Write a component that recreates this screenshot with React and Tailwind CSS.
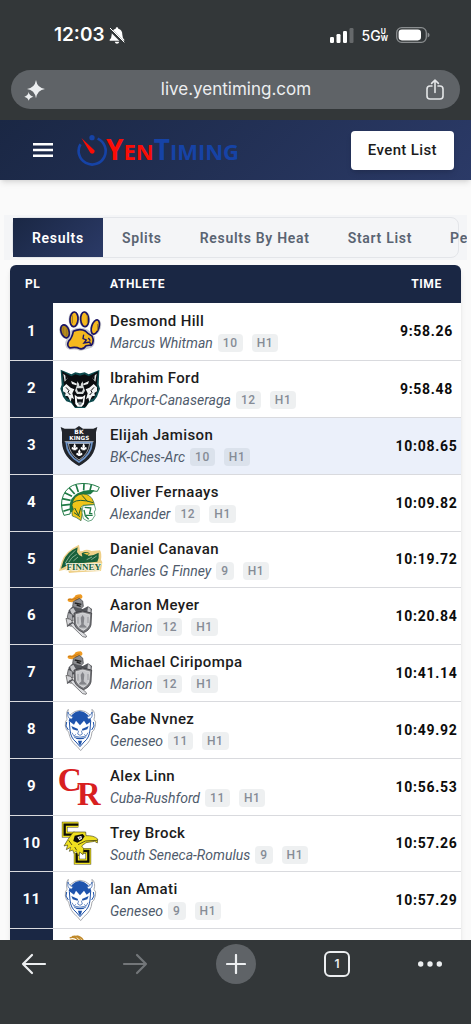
import React, { useState } from 'react';

const TABS = ['Results', 'Splits', 'Results By Heat', 'Start List', 'Performance List'];

const RESULTS = [
  { place: 1, name: 'Desmond Hill', school: 'Marcus Whitman', grade: 10, heat: 'H1', time: '9:58.26', logo: 'paw' },
  { place: 2, name: 'Ibrahim Ford', school: 'Arkport-Canaseraga', grade: 12, heat: 'H1', time: '9:58.48', logo: 'wolf' },
  { place: 3, name: 'Elijah Jamison', school: 'BK-Ches-Arc', grade: 10, heat: 'H1', time: '10:08.65', logo: 'kings', highlight: true },
  { place: 4, name: 'Oliver Fernaays', school: 'Alexander', grade: 12, heat: 'H1', time: '10:09.82', logo: 'trojan' },
  { place: 5, name: 'Daniel Canavan', school: 'Charles G Finney', grade: 9, heat: 'H1', time: '10:19.72', logo: 'finney' },
  { place: 6, name: 'Aaron Meyer', school: 'Marion', grade: 12, heat: 'H1', time: '10:20.84', logo: 'knight' },
  { place: 7, name: 'Michael Ciripompa', school: 'Marion', grade: 12, heat: 'H1', time: '10:41.14', logo: 'knight' },
  { place: 8, name: 'Gabe Nvnez', school: 'Geneseo', grade: 11, heat: 'H1', time: '10:49.92', logo: 'devil' },
  { place: 9, name: 'Alex Linn', school: 'Cuba-Rushford', grade: 11, heat: 'H1', time: '10:56.53', logo: 'cr' },
  { place: 10, name: 'Trey Brock', school: 'South Seneca-Romulus', grade: 9, heat: 'H1', time: '10:57.26', logo: 'falcon' },
  { place: 11, name: 'Ian Amati', school: 'Geneseo', grade: 9, heat: 'H1', time: '10:57.29', logo: 'devil' },
  { place: 12, name: 'Jordan Samuel', school: 'Avon', grade: 11, heat: 'H1', time: '10:58.04', logo: 'brave' },
];

const PawLogo = () => (
  <svg viewBox="172 31 132 132" className="size-11">
    <g fill="#c9cacf" stroke="#c9cacf" strokeWidth="13" strokeLinejoin="round">
      <ellipse cx="193" cy="98" rx="10" ry="16" transform="rotate(-18 193 98)" />
      <ellipse cx="220" cy="62" rx="10" ry="18" />
      <ellipse cx="252" cy="62" rx="10" ry="18" />
      <ellipse cx="285" cy="85" rx="9" ry="18" transform="rotate(18 285 85)" />
      <path d="M216 100Q238 88 260 100L276 116Q278 136 270 141L240 150Q226 144 208 147Q194 140 204 124Z" />
    </g>
    <g fill="#f5b81e" stroke="#1b1464" strokeWidth="5" strokeLinejoin="round">
      <ellipse cx="193" cy="98" rx="12" ry="20" transform="rotate(-18 193 98)" fill="#b58a1c" />
      <ellipse cx="220" cy="62" rx="12" ry="22" transform="rotate(4 220 62)" />
      <ellipse cx="252" cy="62" rx="12" ry="22" transform="rotate(-4 252 62)" />
      <ellipse cx="284" cy="85" rx="11" ry="22" transform="rotate(18 284 85)" />
      <path d="M218 98Q238 88 254 97Q262 106 274 112Q282 128 272 140Q262 139 256 141Q248 153 238 150Q224 143 208 148Q196 141 205 126Q214 118 218 98Z" />
    </g>
    <path d="M188 86v22M198 90v22M215 50v24M260 50v24M291 76v20" stroke="#9a7820" strokeWidth="3" fill="none" />
    <path d="M249 108l-2 12 10 4-7 9 17-3 3 8M263 118l6 8" stroke="#1b1464" strokeWidth="4" fill="none" />
  </svg>
);

const WolfLogo = () => (
  <svg viewBox="172 201 132 132" className="size-11">
    <path d="M180 209l32 14 12-6 14 3 14-3 12 6 32-13-2 44 4 12-9 24-10 14-14 4-12 16h-30l-12-16-14-4-10-14-8-24 4-12z" fill="#0d4a4d" />
    <path d="M184 214l28 15 12-6 14 4 14-4 12 6 28-15-4 40 4 14-12 26-13 6-11 20h-35l-11-20-12-6-12-26 4-14z" fill="#0b0d10" />
    <path d="M188 221l14 12-10 12zM288 221l-14 12 10 12z" fill="#dfe3e4" />
    <path d="M194 225l9 8-8 7zM282 225l-9 8 8 7z" fill="#0b0d10" />
    <path d="M187 262l10-10 13 11 11 5-6 12 5 18-7-5-3 12-8-16-9-2 2-8-8-5zM289 262l-10-10-13 11-11 5 6 12-5 18 7-5 3 12 8-16 9-2-2-8 8-5z" fill="#f2f4f4" />
    <path d="M196 262l9 10-3 5 7 8M280 262l-9 10 3 5-7 8" fill="none" stroke="#0b0d10" strokeWidth="3" />
    <path d="M211 243l18 8-2 5-13-4zM265 243l-18 8 2 5 13-4z" fill="#eef0f0" />
    <path d="M230 244l8 12 8-12 2 14 5 14-6 10h-18l-6-10 5-14z" fill="#d6dada" />
    <path d="M238 232v26" stroke="#0b0d10" strokeWidth="4" />
    <path d="M228 265h20l-4 10h-12z" fill="#0b0d10" />
    <path d="M222 284l8 6h16l8-6-4 28-7 8h-12l-7-8z" fill="#fff" />
    <path d="M228 292l3 6h14l3-6-2 16h-16z" fill="#0b0d10" />
    <path d="M232 312l2-7h8l2 7-6 5z" fill="#8b9599" />
  </svg>
);

const KingsLogo = () => (
  <svg viewBox="172 26 132 132" className="size-11 overflow-visible">
    <path d="M180 35l12 5h31l12-8 12 8h31l12-5-4 16v30q-2 46-51 71q-49-25-51-71V51z" fill="#22252b" />
    <path d="M197 82h77q-2 36-39 58q-37-22-38-58z" fill="#16181c" stroke="#6d94c9" strokeWidth="5" />
    <path d="M192 79h87M203 84h64q-3 32-32 50q-29-18-32-50z" fill="none" stroke="#e6eaee" strokeWidth="2" />
    <text x="235" y="57" textAnchor="middle" fontSize="18" fontWeight="700" fill="#fff" className="font-['DejaVu_Sans',sans-serif]">BK</text>
    <text x="236" y="74" textAnchor="middle" fontSize="17" fontWeight="700" fill="#fff" className="font-['DejaVu_Sans',sans-serif]">KINGS</text>
    <g fill="#fff">
      <path d="M222 84l4 8-2 6q6-6 7 0t-6 4l2 3h-10l2-3q-7 2-6-4t7 0l-2-6z" />
      <path d="M249 84l4 8-2 6q6-6 7 0t-6 4l2 3h-10l2-3q-7 2-6-4t7 0l-2-6z" />
      <path d="M236 101l4 8-2 6q6-6 7 0t-6 4l2 3h-10l2-3q-7 2-6-4t7 0l-2-6z" />
    </g>
  </svg>
);

const TrojanLogo = () => (
  <svg viewBox="172 197 132 132" className="size-11">
    <path d="M190 300q-14-32-2-60q12-28 42-34q34-6 66 10l-6 12q-30-4-52 6q-24 12-26 40l-4 22z" fill="#fff" stroke="#1f7a45" strokeWidth="3" />
    <path d="M208 288q-6-40 24-55q22-11 50-8l-12 12q-36 0-42 22l-6 36z" fill="#1f7a45" />
    <path d="M188 288l24-8M182 270l28-3M184 250l26 5M192 232l22 11M206 218l16 18M226 208l7 22M250 206l-1 19M272 209l-4 16" stroke="#1f7a45" strokeWidth="5" />
    <path d="M214 270q4-34 34-34q22 0 31 24l2 8-34 2-6 6 4 16-4 24q-16-12-26-14q-4-14 3-20z" fill="#f0c419" stroke="#1f5c33" strokeWidth="2" />
    <path d="M216 262q18-14 62 0M244 240l16 18M222 278l12 22 6-22M220 292l18 12" stroke="#1f5c33" strokeWidth="3" fill="none" />
    <path d="M247 271l34-3 4 14-4 8 2 10-9 14-12 4-14-8-4-18z" fill="#fff" stroke="#1f7a45" strokeWidth="2" />
    <path d="M252 276l20 2M270 280l-3 14 8 1M256 300l20 0M250 284l4 18 10 10" stroke="#1f7a45" strokeWidth="4" fill="none" />
  </svg>
);

const FinneyLogo = () => (
  <svg viewBox="172 22 132 132" className="size-11 overflow-visible">
    <path d="M175 124l8-28q10-32 52-51l3 20 8-1q12-8 26 0l26-2q6 10 3 28l4 8-4 26-40 2-30 2-26 2-4-12z" fill="#efd089" />
    <path d="M181 117l7-22q10-28 43-42l-2 14q4 10 16 14l-2-10q12-8 24 0l-6 8q20-2 33-10q2 16-4 27l-84 8z" fill="#19603a" />
    <path d="M194 100q12-24 30-38M204 98q8-16 24-24M218 94l14-12M258 90l16-8M272 90l16-11" stroke="#b9d3bd" strokeWidth="2" fill="none" />
    <path d="M248 70l12-1 8 5-10 1z" fill="#f3c846" />
    <text x="249" y="121" textAnchor="middle" fontSize="27" fontWeight="700" fill="#19603a" stroke="#f7f1dc" strokeWidth="5" paintOrder="stroke" className="font-['Liberation_Serif',serif]">FINNEY</text>
  </svg>
);

const KnightLogo = () => (
  <svg viewBox="172 191 132 132" className="size-11">
    <path d="M200 209q4-8 14-4l8-6q0-6 18-7q8 4 4 12l-18 6-12 6-10-2z" fill="#ee9a22" />
    <path d="M202 207q14 4 34-8M222 206l14 4" stroke="#b96d12" strokeWidth="2" fill="none" />
    <path d="M218 214l18-10 10 8 2 16-8 8-14-2-10-6z" fill="#8b8c90" stroke="#3b3c40" strokeWidth="2" />
    <path d="M222 218l20 4M228 224l12 4" stroke="#222" strokeWidth="4" />
    <path d="M204 240l12-12 18 6 12 2 16-8 12 8-2 16-60 10-10-6z" fill="#54565b" />
    <path d="M208 238l10-6 8 14-10 12zM262 230l8 6v12l-10-4z" fill="#c4c5c8" />
    <path d="M203 246l12 6 2 20-12-2-5-10z" fill="#a8a9ad" stroke="#3b3c40" strokeWidth="2" />
    <path d="M196 264l14 3 6 9-4 12-12-4z" fill="#d5d5d8" stroke="#444" strokeWidth="2" />
    <path d="M206 280l10-3 42 40-2 4-10-2z" fill="#dcdde0" stroke="#4a4b4f" strokeWidth="2" />
    <path d="M199 288l18-12" stroke="#55565b" strokeWidth="4" />
    <path d="M220 248l26-6 27 6-2 36q-4 16-22 23q-22-8-28-25z" fill="#75767a" stroke="#2d2e32" strokeWidth="2" />
    <path d="M226 253l20-5 21 5-2 29q-4 12-17 18q-15-6-20-19z" fill="#c7c8cb" stroke="#eee" strokeWidth="2" />
    <path d="M246 254l5 8-2 20 9 8h-24l8-8-2-20z" fill="#838489" />
    <path d="M232 260v20M262 260v18M236 292h22" stroke="#96979b" strokeWidth="3" />
  </svg>
);

const DevilLogo = () => (
  <svg viewBox="172 188 132 132" className="size-11">
    <path d="M203 192q-6 12 3 18q32-30 64 0q8-6 4-18q12 10 6 30q8 6 4 20q-4 16-10 18q-2 28-24 44l-10 12-10-12q-22-16-26-44q-8-4-10-18q-2-14 5-20q-4-22 4-30z" fill="#fff" stroke="#a9abb0" strokeWidth="3" />
    <path d="M208 216q28-38 60 0l4 12-14 10-8-12-12 14-12-14-6 12-16-12z" fill="#1f54ad" />
    <path d="M202 200q-4 18 10 22l6-8q-12 0-16-14zM274 200q4 18-10 22l-6-8q12 0 16-14z" fill="#fff" stroke="#1e52a8" strokeWidth="2" />
    <path d="M206 228l2 26q2 24 18 36l12 14 12-14q16-12 18-36l2-26" fill="none" stroke="#1e52a8" strokeWidth="3" />
    <path d="M198 230l-2 12 7 12M278 230l2 12-7 12" fill="none" stroke="#1e52a8" strokeWidth="3" />
    <path d="M212 242l20 9-1 5-15-4zM264 242l-20 9 1 5 15-4z" fill="#1e52a8" />
    <path d="M234 256l-3 10 7 4 7-4-3-10M214 262l6 10 6-5M262 262l-6 10-6-5" fill="none" stroke="#1e52a8" strokeWidth="2" />
    <path d="M218 274q10-3 20 0q10-3 20 0q-8 8-20 8t-20-8z" fill="#1e52a8" />
    <path d="M224 276h28" stroke="#fff" strokeWidth="2" />
    <path d="M232 286h12l-2 8-4 8-4-8z" fill="#1e52a8" />
  </svg>
);

const CrLogo = () => (
  <svg viewBox="172 28 132 132" className="size-11 overflow-visible">
    <g fill="#d8201f" fontWeight="700" className="font-['Liberation_Serif',serif]">
      <text x="171" y="106" fontSize="100">C</text>
      <text x="229" y="149" fontSize="98">R</text>
    </g>
  </svg>
);

const FalconLogo = () => (
  <svg viewBox="172 198 132 132" className="size-11">
    <path d="M233 209h-41v30h30M228 294v26h35v-32h-20" fill="none" stroke="#4a4718" strokeWidth="17" />
    <path d="M233 209h-41v30h30M228 294v26h35v-32h-20" fill="none" stroke="#efe01f" strokeWidth="14" />
    <path d="M233 209h-41v30h30M228 294v26h35v-32h-20" fill="none" stroke="#0c0c08" strokeWidth="7" />
    <path d="M218 231h37l1 11q24-1 35 10l-1 12-8-5-26 4-13 10 6 8-2 18-10-8-3 12-8-14-6 6-4-10-10 4 4-12-13 7 4-14-11 3 12-20z" fill="#efe01f" stroke="#4a4718" strokeWidth="2" strokeLinejoin="round" />
    <path d="M222 242l24-5 6 7-8 12-14 7-12-5z" fill="#0c0c08" />
    <path d="M230 246l12-3 2 8-8 5z" fill="#fff" />
    <path d="M234 248l6-1-2 5z" fill="#0c0c08" />
    <path d="M232 269l22-11 36-2M204 256l10 14M222 276l6 10" stroke="#5b5714" strokeWidth="3" fill="none" />
  </svg>
);

const BraveLogo = () => (
  <svg viewBox="172 209 132 132" className="size-11">
    <path d="M207 218q16-8 30 12M214 214q18-6 30 16M228 212q16 2 22 18M206 226q14-6 24 6" stroke="#c08a2b" strokeWidth="4" fill="none" />
    <path d="M212 232h44l10 40-20 40h-30l-14-40z" fill="#c08a2b" />
  </svg>
);

const LOGOS = {
  paw: PawLogo,
  wolf: WolfLogo,
  kings: KingsLogo,
  trojan: TrojanLogo,
  finney: FinneyLogo,
  knight: KnightLogo,
  devil: DevilLogo,
  cr: CrLogo,
  falcon: FalconLogo,
  brave: BraveLogo,
};

const StatusBar = () => (
  <div className="flex h-[70px] items-center justify-between pr-[41px] pl-[54px] font-['Inter',sans-serif] text-white">
    <div className="flex items-center gap-1">
      <span className="text-[19px] font-semibold">12:03</span>
      <svg viewBox="0 0 48 51" className="h-[17px] w-4">
        <path d="M24 1q4 0 4 4q12 3 12 18q0 9 6 15v3H2v-3q6-6 6-15q0-15 12-18q0-4 4-4zM17 44h14q-2 6-7 6t-7-6z" fill="#fff" />
        <path d="M2 6l43 43" stroke="#333739" strokeWidth="9" />
        <path d="M3 3l43 43" stroke="#fff" strokeWidth="3" />
      </svg>
    </div>
    <div className="flex items-center">
      <svg viewBox="0 0 24 15" className="h-[15px] w-6">
        <rect x="0" y="9" width="4" height="6" rx="1.2" fill="#fff" />
        <rect x="6.5" y="6" width="4" height="9" rx="1.2" fill="#fff" />
        <rect x="13" y="3" width="4" height="12" rx="1.2" fill="#fff" />
        <rect x="19.5" y="0" width="4" height="15" rx="1.2" fill="#66696b" />
      </svg>
      <span className="ml-2 text-[14px] font-medium">5G</span>
      <span className="flex flex-col text-[7px] leading-[7px] font-bold">
        <span>U</span>
        <span>W</span>
      </span>
      <svg viewBox="0 0 34 16" className="ml-2 h-4 w-[34px]">
        <rect x="0.7" y="0.7" width="29.6" height="14.6" rx="5" fill="none" stroke="#8b8e90" strokeWidth="1.3" />
        <rect x="2.6" y="2.6" width="22.4" height="10.8" rx="3.3" fill="#fff" />
        <path d="M31.6 5.4q2 .8 2 2.6t-2 2.6z" fill="#8b8e90" />
      </svg>
    </div>
  </div>
);

const AddressBar = () => (
  <div className="mx-[11px] mb-[11px] flex h-[39px] items-center justify-between rounded-full bg-[#5f6367] pr-4 pl-[13px] font-['Inter',sans-serif] text-[#eceef0]">
    <button aria-label="Assistant">
      <svg viewBox="70 236 66 66" className="size-[22px]" fill="#eceef0">
        <path d="M106 239q4 24 27 27q-23 3-27 28q-4-25-27-28q23-3 27-27z" />
        <path d="M84 275q2 11 14 14q-12 3-14 12q-2-9-13-12q11-3 13-14z" />
      </svg>
    </button>
    <span className="text-[17px]">live.yentiming.com</span>
    <button aria-label="Share">
      <svg viewBox="0 0 18 21" className="h-[21px] w-[18px]" fill="none" stroke="#e4e6e8" strokeWidth="1.6" strokeLinecap="round" strokeLinejoin="round">
        <path d="M6 7H4Q1 7 1 10v7q0 3 3 3h10q3 0 3-3v-7q0-3-3-3h-2M9 13.5V1.4M5.6 4.4L9 1.2l3.4 3.2" />
      </svg>
    </button>
  </div>
);

const SiteHeader = () => (
  <header className="relative flex h-[60px] items-center bg-linear-135 from-[#1a2744] to-[#2b3a67] pr-[17px] pl-[31px] shadow-md">
    <button aria-label="Menu" className="text-white">
      <svg viewBox="0 0 24 24" className="size-6" fill="currentColor">
        <path d="M2 5h20v2.4H2zM2 10.8h20v2.4H2zM2 16.6h20V19H2z" />
      </svg>
    </button>
    <a href="#home" className="ml-[21px] flex items-center">
      <svg viewBox="228 55 96 100" className="h-[33px] w-8">
        <path d="M293 69A41 41 0 1 1 241 86" fill="none" stroke="#1643a6" strokeWidth="8" />
        <circle cx="276" cy="66" r="8" fill="#1643a6" />
        <path d="M244 67l40 38q1 9-8 10q-6-1-7-6z" fill="#f90d06" />
      </svg>
      <span className="-ml-0.5 font-['Open_Sans',sans-serif] text-[22px] leading-8 font-bold text-[#f90d06]">
        <span className="text-[28px]">Y</span>EN
        <span className="text-[#1643a6]">
          <span className="text-[28px]">T</span>IMING
        </span>
      </span>
    </a>
    <button className="ml-auto h-[39px] rounded bg-white px-[17px] text-[15px] font-medium tracking-wide text-[#1c1c1c] shadow-md">
      Event List
    </button>
  </header>
);

const Chip = ({ children }) => (
  <span className="rounded bg-[#2b3a4a]/8 px-[5px] text-xs leading-[18px] font-medium tracking-wider text-[#868c96]">
    {children}
  </span>
);

const ResultRow = ({ result }) => {
  const Logo = LOGOS[result.logo];

  return (
    <tr className={`h-[57px] border-b border-[#d9dade] nth-[5n]:h-14 ${result.highlight ? 'bg-[#ebf0fa]' : 'bg-white'}`}>
      <td className="bg-[#1a2744] text-center text-[15px] font-bold tracking-wide text-white">{result.place}</td>
      <td className="pl-[5px]">
        <Logo />
      </td>
      <td className="whitespace-nowrap">
        <div className="text-[15px] leading-5 font-medium tracking-wide text-[#1c1c1c]">{result.name}</div>
        <div className="mt-[3px] flex items-center">
          <span className="mr-[5px] text-sm leading-[18px] text-[#4f5b6c] italic">{result.school}</span>
          <span className="flex gap-[9px]">
            <Chip>{result.grade}</Chip>
            <Chip>{result.heat}</Chip>
          </span>
        </div>
      </td>
      <td className="text-center text-sm font-bold tracking-wider text-[#0c0c0c]">{result.time}</td>
    </tr>
  );
};

const BottomBar = () => (
  <nav className="flex h-[84px] shrink-0 items-start justify-between bg-[#333739] pt-1 pr-[13px] pl-[14px] font-['Inter',sans-serif] text-[#eceef0]">
    <button aria-label="Back" className="flex size-10 items-center justify-center">
      <svg viewBox="0 0 26 22" className="h-[22px] w-[26px]" fill="none" stroke="currentColor" strokeWidth="2.2" strokeLinecap="round" strokeLinejoin="round">
        <path d="M24 11H2M11 2L2 11l9 9" />
      </svg>
    </button>
    <button aria-label="Forward" disabled className="flex size-10 items-center justify-center text-[#737679]">
      <svg viewBox="0 0 26 22" className="h-[22px] w-[26px]" fill="none" stroke="currentColor" strokeWidth="2.2" strokeLinecap="round" strokeLinejoin="round">
        <path d="M2 11h22M15 2l9 9-9 9" />
      </svg>
    </button>
    <button aria-label="New tab" className="flex size-10 items-center justify-center rounded-full bg-[#5f6367]">
      <svg viewBox="0 0 20 20" className="size-5" stroke="currentColor" strokeWidth="2.2" strokeLinecap="round">
        <path d="M10 1v18M1 10h18" />
      </svg>
    </button>
    <button className="flex size-10 items-center justify-center text-xs font-semibold">
      <span className="flex size-[26px] items-center justify-center rounded-md border-2 border-[#eceef0]">1</span>
    </button>
    <button aria-label="More" className="flex size-10 items-center justify-start">
      <svg viewBox="0 0 24 6" className="h-[6px] w-6" fill="currentColor">
        <circle cx="2.7" cy="3" r="2.7" />
        <circle cx="12" cy="3" r="2.7" />
        <circle cx="21.3" cy="3" r="2.7" />
      </svg>
    </button>
  </nav>
);

const App = () => {
  const [activeTab, setActiveTab] = useState('Results');

  return (
    <div className="flex h-screen flex-col bg-[#fafafa] font-['Roboto',sans-serif]">
      <div className="shrink-0 bg-[#333739]">
        <StatusBar />
        <AddressBar />
      </div>

      <main className="min-h-0 flex-1 overflow-hidden">
        <SiteHeader />

        {/* Tabs */}
        <div className="mx-1 mt-[35px] overflow-hidden bg-[#f4f5f7] px-2 py-[2px]">
          <div role="tablist" className="flex h-[41px] rounded-lg border border-[#e3e5e9]">
            {TABS.map((tab) => (
              <button
                key={tab}
                role="tab"
                aria-selected={activeTab === tab}
                onClick={() => setActiveTab(tab)}
                className={`shrink-0 px-[19px] text-sm font-semibold tracking-wider ${
                  activeTab === tab ? 'bg-linear-135 from-[#1a2744] to-[#2b3a67] text-white' : 'text-[#5a6472]'
                }`}
              >
                {tab}
              </button>
            ))}
          </div>
        </div>

        {/* Results */}
        <div className="mx-[10px] mt-[5px] overflow-hidden rounded-md shadow-md">
          <table className="w-full table-fixed border-collapse">
            <colgroup>
              <col className="w-[43px]" />
              <col className="w-[57px]" />
              <col />
              <col className="w-[69px]" />
            </colgroup>
            <thead>
              <tr className="h-[38px] bg-[#1a2744] text-left text-xs tracking-wider text-white">
                <th className="pl-[15px] font-bold">PL</th>
                <th aria-label="Logo" />
                <th className="font-bold">ATHLETE</th>
                <th className="text-center font-bold">TIME</th>
              </tr>
            </thead>
            <tbody>
              {RESULTS.map((result) => (
                <ResultRow key={result.place} result={result} />
              ))}
            </tbody>
          </table>
        </div>
      </main>

      <BottomBar />
    </div>
  );
};

export default App;
